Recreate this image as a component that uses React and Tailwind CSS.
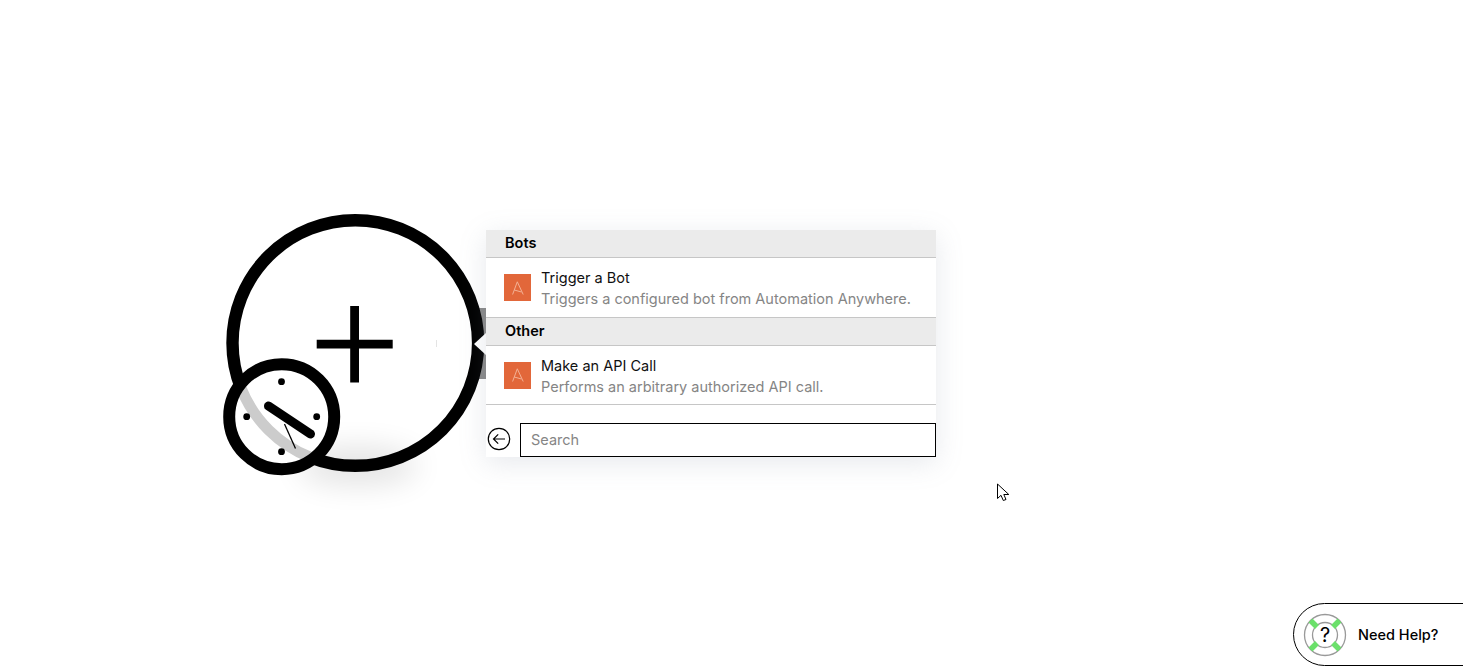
import { useState } from 'react';

const sections = [
  {
    name: 'Bots',
    rowHeight: 'h-[60px]',
    items: [{ title: 'Trigger a Bot', desc: 'Triggers a configured bot from Automation Anywhere.' }],
  },
  {
    name: 'Other',
    rowHeight: 'h-[59px]',
    items: [{ title: 'Make an API Call', desc: 'Performs an arbitrary authorized API call.' }],
  },
];

function AppLogo() {
  return (
    <div className="flex h-[27px] w-[27px] shrink-0 items-center justify-center bg-[#e2673a]">
      <svg width="12" height="14" viewBox="0 0 12 14" fill="none" stroke="#f3b195" strokeWidth="1">
        <path d="M.6 13.500 5.300 .8 11.200 13.500" />
        <path d="M2.200 9 9.500 11" />
      </svg>
    </div>
  );
}

function ModuleNode() {
  return (
    <svg className="absolute left-[210px] top-[200px]" width="290" height="310" viewBox="210 200 290 310" fill="none">
      <defs>
        <filter id="nodeShadow" x="-60%" y="-120%" width="220%" height="340%">
          <feGaussianBlur stdDeviation="15" />
        </filter>
        <clipPath id="clockFace">
          <circle cx="281.7" cy="416.7" r="52" />
        </clipPath>
      </defs>
      <rect x="470" y="308" width="16" height="71" fill="#8a8a8a" />
      <circle cx="355.3" cy="343" r="122.8" fill="#fff" />
      <ellipse cx="358" cy="466" rx="60" ry="19" fill="#000" opacity="0.11" filter="url(#nodeShadow)" />
      <circle cx="355.3" cy="343" r="122.8" stroke="#000" strokeWidth="12.400" />
      <path d="M474 344 486 333V355Z" fill="#fff" />
      <path d="M436.500 340V347" stroke="#e4e4e4" strokeWidth="1" />
      <path d="M316.700 344.200H392.700M354.600 306V382.500" stroke="#000" strokeWidth="8.800" />

      <circle cx="281.7" cy="416.7" r="52" fill="#fff" />
      <g clipPath="url(#clockFace)">
        <circle cx="355.300" cy="343" r="122.800" stroke="#cccccc" strokeWidth="11" />
      </g>
      <circle cx="281.7" cy="416.7" r="52.500" stroke="#000" strokeWidth="12" />
      <circle cx="281.500" cy="381.700" r="3.400" fill="#000" />
      <circle cx="246.700" cy="416.700" r="3.400" fill="#000" />
      <circle cx="316.700" cy="416.700" r="3.400" fill="#000" />
      <circle cx="281.500" cy="451.700" r="3.400" fill="#000" />
      <path d="M268.500 406 310.500 434" stroke="#000" strokeWidth="9" strokeLinecap="round" />
      <path d="M284.500 424 295.500 448.500" stroke="#000" strokeWidth="1.300" />
    </svg>
  );
}

function BackIcon() {
  return (
    <svg width="24" height="24" viewBox="0 0 24 24" fill="none" stroke="#000" strokeWidth="1.200">
      <circle cx="12" cy="12" r="10.700" />
      <path d="M18 12H6.500M11.200 7.300 6.500 12l4.700 4.700" />
    </svg>
  );
}

function HelpIcon() {
  return (
    <svg width="46" height="46" viewBox="0 0 46 46" fill="none">
      <circle cx="23" cy="23" r="20.500" stroke="#999" strokeWidth="1.300" />
      <circle cx="23" cy="23" r="12.500" stroke="#999" strokeWidth="1.300" />
      <path d="M8.500 8.500 15 15M37.500 8.500 31 15M8.500 37.500 15 31M37.500 37.500 31 31" stroke="#6be06b" strokeWidth="5.500" />
      <text x="23" y="30" textAnchor="middle" fontSize="20" fontWeight="400" fill="#000" fontFamily="Inter, sans-serif">?</text>
    </svg>
  );
}

export default function App() {
  const [query, setQuery] = useState('');

  return (
    <div className="relative h-[668px] w-full overflow-hidden bg-white font-['Inter',sans-serif]">
      <ModuleNode />

      <div className="absolute left-[486px] top-[230px] flex w-[450px] flex-col bg-white shadow-[0_6px_26px_rgba(120,135,155,0.18)]">
        {sections.map((s) => (
          <div key={s.name}>
            <div className="flex h-[28px] items-center border-b border-[#c6c6c6] bg-[#ebebeb] pb-[1px] pl-[19px] text-[14.5px] font-semibold leading-none text-black">
              {s.name}
            </div>
            {s.items.map((item) => (
              <div key={item.title} className={`flex ${s.rowHeight} items-center gap-[10px] border-b border-[#c6c6c6] pl-[18px]`}>
                <AppLogo />
                <div className="flex flex-col gap-[4px] pt-[1px] text-[14.5px] leading-[17px]">
                  <span className="text-[#111]">{item.title}</span>
                  <span className="text-[#858585]">{item.desc}</span>
                </div>
              </div>
            ))}
          </div>
        ))}
        <div className="flex h-[52px] items-end">
          <div className="flex h-[34px] w-[34px] shrink-0 items-center justify-center pb-[2px] pr-[8px]">
            <BackIcon />
          </div>
          <input
            value={query}
            onChange={(e) => setQuery(e.target.value)}
            placeholder="Search"
            className="h-[34px] flex-1 border border-black pb-[1px] pl-[10px] pr-[10px] text-[14.5px] text-black outline-none placeholder:text-[#858585]"
          />
        </div>
      </div>

      <svg className="absolute left-[997px] top-[483px]" width="14" height="20" viewBox="0 0 14 20" fill="#fff" stroke="#000" strokeWidth="1">
        <path d="M.5 1V15.500L4 12.300 6.300 17.500 9 16.500 6.800 11.500H11.800Z" />
      </svg>

      <div className="absolute left-[1293px] top-[603px] flex h-[63px] w-[180px] items-center gap-[10px] rounded-l-full border border-black bg-white pl-[8px]">
        <HelpIcon />
        <span className="text-[14.500px] font-medium text-black">Need Help?</span>
      </div>
    </div>
  );
}
